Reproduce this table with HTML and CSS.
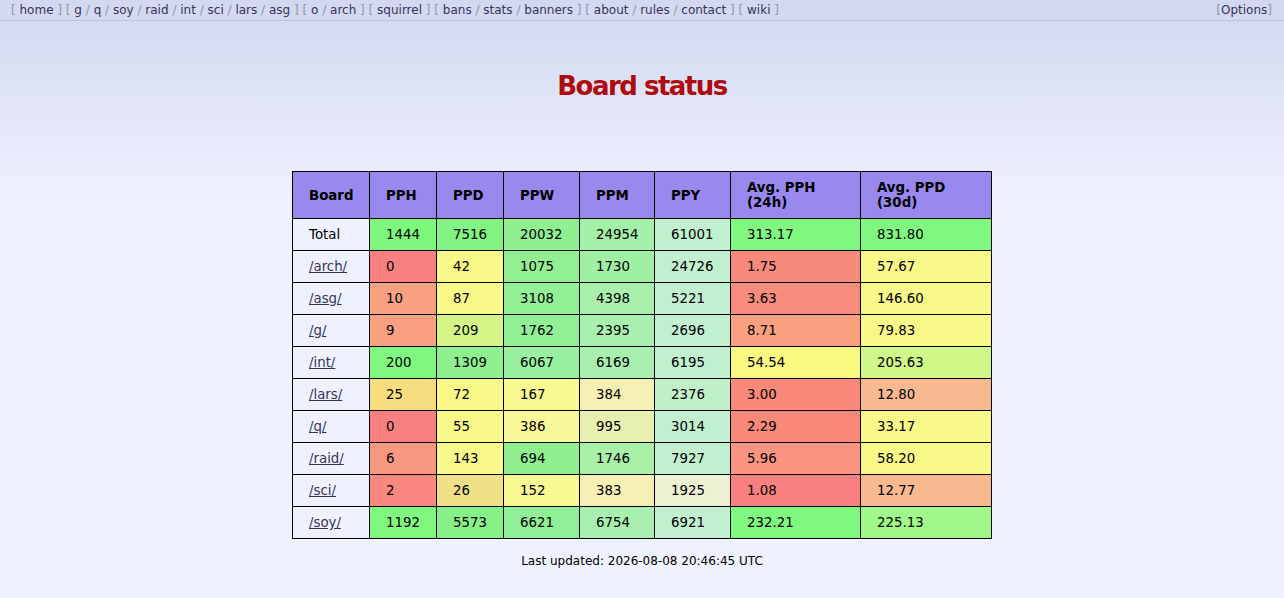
FILE: index.html
```html
<!DOCTYPE html>
<html lang="en">
<head>
<meta charset="utf-8">
<title>Board status</title>
<link rel="stylesheet" href="styles.css">
</head>
<body>
<nav class="topnav">
  <div class="boards">[ <a href="#">home</a> ] [ <a href="#">g</a> / <a href="#">q</a> / <a href="#">soy</a> / <a href="#">raid</a> / <a href="#">int</a> / <a href="#">sci</a> / <a href="#">lars</a> / <a href="#">asg</a> ] [ <a href="#">o</a> / <a href="#">arch</a> ] [ <a href="#">squirrel</a> ] [ <a href="#">bans</a> / <a href="#">stats</a> / <a href="#">banners</a> ] [ <a href="#">about</a> / <a href="#">rules</a> / <a href="#">contact</a> ] [ <a href="#">wiki</a> ]</div>
  <div class="options">[<a href="#">Options</a>]</div>
</nav>
<h1 class="title">Board status</h1>
<table class="stats">
  <colgroup>
    <col class="c-board"><col class="c-n1"><col class="c-n2"><col class="c-n3"><col class="c-n4"><col class="c-n5"><col class="c-avg"><col class="c-avg2">
  </colgroup>
  <thead>
    <tr><th>Board</th><th>PPH</th><th>PPD</th><th>PPW</th><th>PPM</th><th>PPY</th><th>Avg. PPH<br>(24h)</th><th>Avg. PPD<br>(30d)</th></tr>
  </thead>
  <tbody>
    <tr><td class="name">Total</td><td style="background:#7df87d">1444</td><td style="background:#82f282">7516</td><td style="background:#90f090">20032</td><td style="background:#a4f0a8">24954</td><td style="background:#c0f0d0">61001</td><td style="background:#80f880">313.17</td><td style="background:#80f880">831.80</td></tr>
    <tr><td class="name"><a href="#">/arch/</a></td><td style="background:#f88080">0</td><td style="background:#f8f888">42</td><td style="background:#92f092">1075</td><td style="background:#a0f0a4">1730</td><td style="background:#c0f0d0">24726</td><td style="background:#f88a7c">1.75</td><td style="background:#f8f888">57.67</td></tr>
    <tr><td class="name"><a href="#">/asg/</a></td><td style="background:#f8a080">10</td><td style="background:#f8f888">87</td><td style="background:#92f096">3108</td><td style="background:#a8f0ac">4398</td><td style="background:#c0f0d0">5221</td><td style="background:#f88c7c">3.63</td><td style="background:#f8f888">146.60</td></tr>
    <tr><td class="name"><a href="#">/g/</a></td><td style="background:#f8a080">9</td><td style="background:#d4f488">209</td><td style="background:#90f096">1762</td><td style="background:#a8f0b0">2395</td><td style="background:#c0f0d0">2696</td><td style="background:#f8a080">8.71</td><td style="background:#f8f888">79.83</td></tr>
    <tr><td class="name"><a href="#">/int/</a></td><td style="background:#80f880">200</td><td style="background:#8ef08e">1309</td><td style="background:#98f0a0">6067</td><td style="background:#a8f0b0">6169</td><td style="background:#c0f0d0">6195</td><td style="background:#f8f880">54.54</td><td style="background:#d0f888">205.63</td></tr>
    <tr><td class="name"><a href="#">/lars/</a></td><td style="background:#f8dc80">25</td><td style="background:#f8f888">72</td><td style="background:#f8f890">167</td><td style="background:#f4f0b4">384</td><td style="background:#c0f0c8">2376</td><td style="background:#f88878">3.00</td><td style="background:#f8b890">12.80</td></tr>
    <tr><td class="name"><a href="#">/q/</a></td><td style="background:#f88080">0</td><td style="background:#f8f888">55</td><td style="background:#f8f898">386</td><td style="background:#e8f0b0">995</td><td style="background:#c0f0d0">3014</td><td style="background:#f88878">2.29</td><td style="background:#f8f888">33.17</td></tr>
    <tr><td class="name"><a href="#">/raid/</a></td><td style="background:#f89880">6</td><td style="background:#f8f888">143</td><td style="background:#90f090">694</td><td style="background:#a8f0a8">1746</td><td style="background:#c0f0d0">7927</td><td style="background:#f89480">5.96</td><td style="background:#f8f888">58.20</td></tr>
    <tr><td class="name"><a href="#">/sci/</a></td><td style="background:#f88880">2</td><td style="background:#f0e088">26</td><td style="background:#f8f890">152</td><td style="background:#f4f0b4">383</td><td style="background:#eef0d4">1925</td><td style="background:#f88080">1.08</td><td style="background:#f8b890">12.77</td></tr>
    <tr><td class="name"><a href="#">/soy/</a></td><td style="background:#80f880">1192</td><td style="background:#88f088">5573</td><td style="background:#90f098">6621</td><td style="background:#a8f0b0">6754</td><td style="background:#c0f0d0">6921</td><td style="background:#80f880">232.21</td><td style="background:#a0f888">225.13</td></tr>
  </tbody>
</table>
<p class="updated">Last updated: 2026-08-08 20:46:45 UTC</p>
</body>
</html>
```
FILE: styles.css
```css
html {
  background: #eef2ff;
}
body {
  margin: 0;
  min-height: 598px;
  background: linear-gradient(#d3d7ef 0, #eef2ff 210px) no-repeat;
  font-family: "DejaVu Sans", Verdana, sans-serif;
  font-size: 13.33px;
  color: #000;
}
.topnav {
  display: flex;
  justify-content: space-between;
  padding: 3px 12px 2px 11px;
  font-size: 12px;
  line-height: 15px;
  color: #8899aa;
  border-bottom: 1px solid #bcc4e2;
}
.topnav a {
  color: #34345c;
  text-decoration: none;
}
.title {
  margin: 50px 0 0;
  text-align: center;
  font-size: 26px;
  line-height: 30px;
  letter-spacing: -1.5px;
  font-weight: bold;
  color: #af0a0f;
}
.stats {
  margin: 70px auto 0;
  width: 699px;
  table-layout: fixed;
  border-collapse: collapse;
  line-height: 15px;
}
.c-board { width: 77px; }
.c-n1 { width: 67px; }
.c-n2 { width: 67px; }
.c-n3 { width: 76px; }
.c-n4 { width: 75px; }
.c-n5 { width: 76px; }
.c-avg { width: 130px; }
.c-avg2 { width: 131px; }
.stats th,
.stats td {
  border: 1px solid #000;
  padding: 8px 16px;
  text-align: left;
  vertical-align: middle;
}
.stats th {
  background: #9988ee;
  font-weight: bold;
}
.stats td.name {
  background: #eef2ff;
}
.stats a {
  color: #34345c;
  text-decoration: underline;
}
.updated {
  margin: 15px 0 0;
  text-align: center;
  font-size: 12px;
  line-height: 15px;
}
```
